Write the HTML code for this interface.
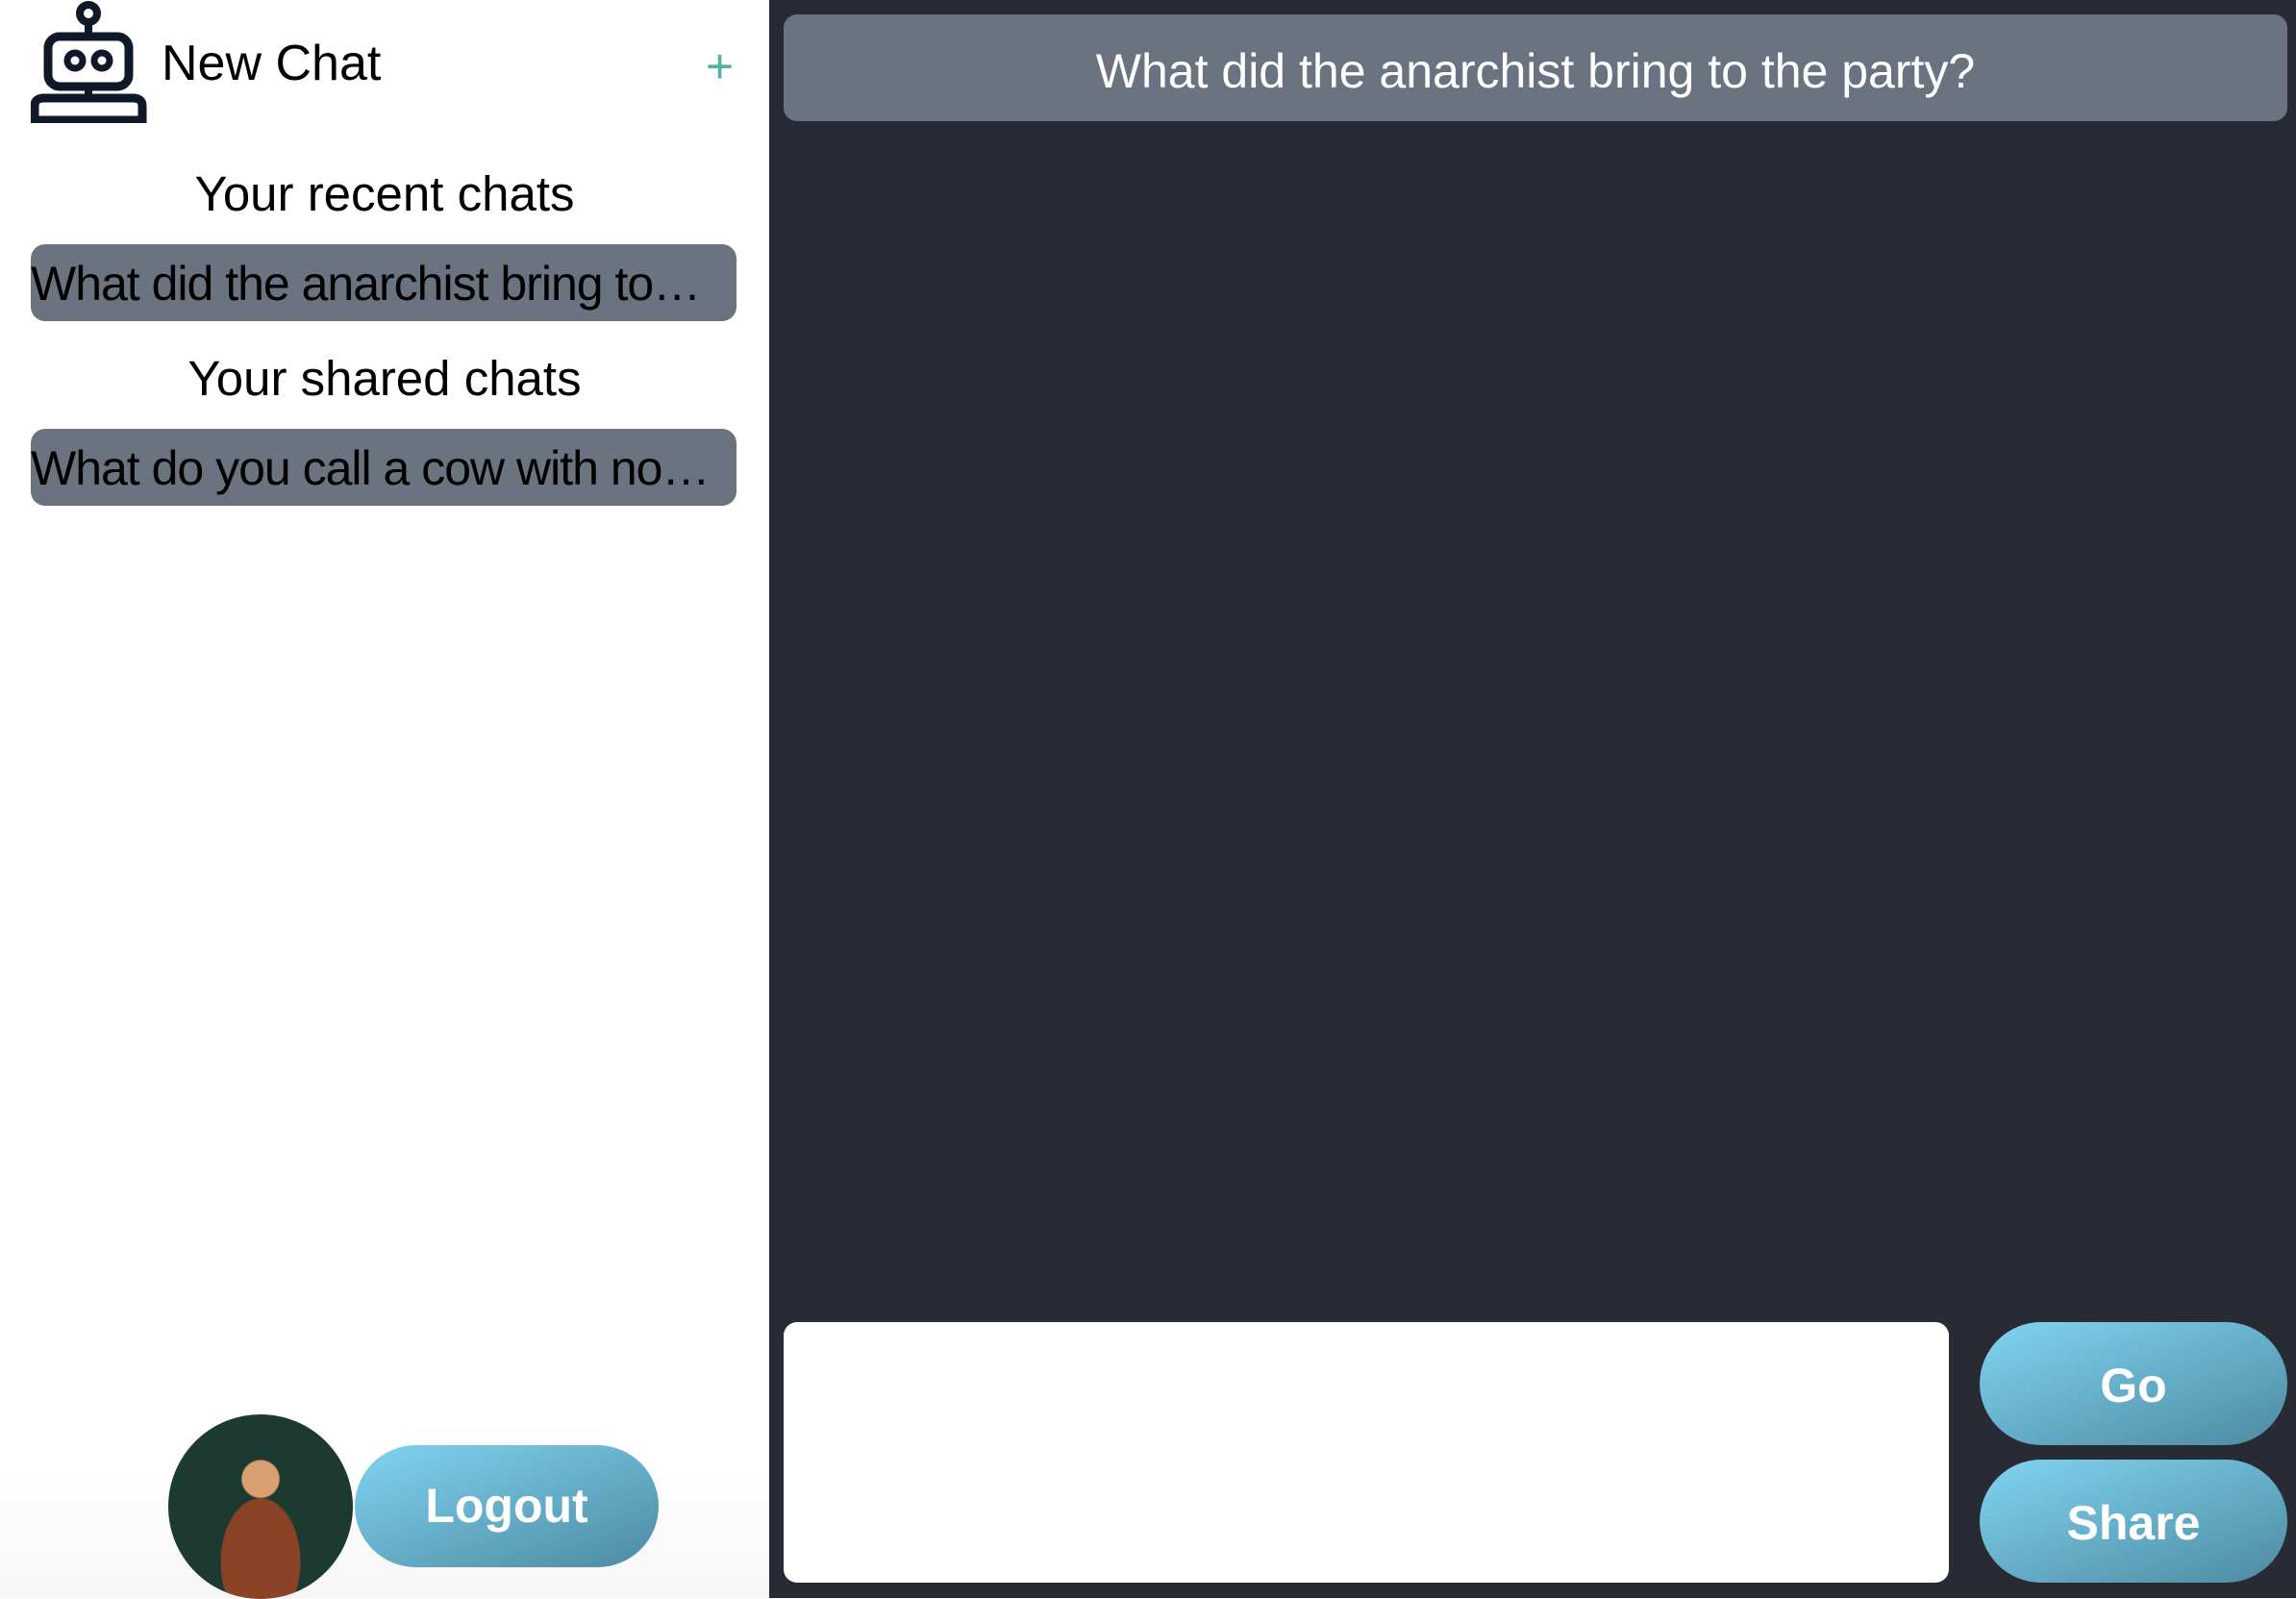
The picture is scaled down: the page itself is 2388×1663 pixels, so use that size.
<!DOCTYPE html>
<html><head><meta charset="utf-8"><style>
*{box-sizing:border-box;margin:0;padding:0}
body{width:2388px;height:1662px;overflow:hidden;font-family:"Liberation Sans",sans-serif;background:#fff;position:relative}
.side{position:absolute;left:0;top:0;width:800px;height:1662px;background:linear-gradient(#fff 92%,#f6f6f6)}
.main{position:absolute;left:800px;top:0;width:1588px;height:1662px;background:#292b34}
.abs{position:absolute}
.h{position:absolute;left:0;width:800px;text-align:center;font-size:51px;color:#000}
.item{position:absolute;left:32px;width:734px;height:80px;background:#6b7280;border-radius:15px;font-size:50px;letter-spacing:-1px;line-height:82px;color:#000;white-space:nowrap;overflow:hidden;text-overflow:ellipsis;padding-right:24px}
.btn{position:absolute;border-radius:70px;background:linear-gradient(160deg,#80d4f2,#4d8aa1);color:#fff;font-weight:bold;font-size:50px;text-align:center}
</style></head><body>
<div class="side">
<svg class="abs" style="left:32px;top:0" width="122" height="128" viewBox="32 0 122 128">
<circle cx="92" cy="14" r="9" fill="none" stroke="#111827" stroke-width="8"/>
<line x1="92" y1="23" x2="92" y2="36" stroke="#111827" stroke-width="8"/>
<rect x="50" y="38" width="84" height="52" rx="12" fill="none" stroke="#111827" stroke-width="9"/>
<circle cx="78" cy="63" r="8" fill="none" stroke="#111827" stroke-width="7"/>
<circle cx="106" cy="63" r="8" fill="none" stroke="#111827" stroke-width="7"/>
<line x1="92" y1="90" x2="92" y2="102" stroke="#111827" stroke-width="8"/>
<path d="M36 125 V110 Q36 102 46 102 H138 Q148 102 148 110 V125 Z" fill="none" stroke="#111827" stroke-width="9"/>
</svg>
<div class="abs" style="left:168px;top:36px;font-size:52px;color:#000">New Chat</div>
<div class="abs" style="left:734px;top:40px;font-size:50px;color:#4fb3a0">+</div>
<div class="h" style="top:172px">Your recent chats</div>
<div class="item" style="top:254px">What did the anarchist bring to the party?</div>
<div class="h" style="top:364px">Your shared chats</div>
<div class="item" style="top:446px">What do you call a cow with no legs?</div>
<div class="abs" style="left:175px;top:1471px;width:192px;height:192px;border-radius:50%;background:radial-gradient(circle at 50% 35%,#d8a070 0 12%,transparent 13%),radial-gradient(ellipse at 50% 80%,#8a4325 0 30%,transparent 31%),#1d3a30;overflow:hidden"></div>
<div class="btn" style="left:369px;top:1503px;width:316px;height:127px;line-height:127px">Logout</div>
</div>
<div class="main">
<div class="abs" style="left:15px;top:15px;width:1564px;height:111px;background:#6b7280;border-radius:14px;color:#fff;font-size:50px;line-height:118px;text-align:center">What did the anarchist bring to the party?</div>
<div class="abs" style="left:15px;top:1375px;width:1212px;height:271px;background:#fff;border-radius:14px"></div>
<div class="btn" style="left:1259px;top:1375px;width:320px;height:128px;line-height:132px">Go</div>
<div class="btn" style="left:1259px;top:1518px;width:320px;height:128px;line-height:132px">Share</div>
</div>
</body></html>
